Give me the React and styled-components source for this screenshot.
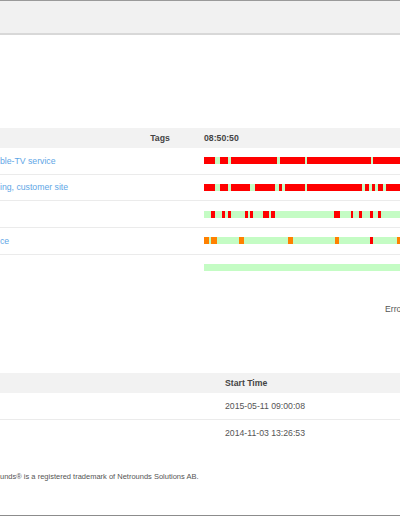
import React from "react";
import styled, { createGlobalStyle } from "styled-components";

const GlobalStyle = createGlobalStyle`
  html, body {
    margin: 0;
    padding: 0;
    background: #ffffff;
    overflow: hidden;
  }
  body {
    font-family: "Liberation Sans", Arial, Helvetica, sans-serif;
    color: #555;
  }
`;

const Page = styled.div`
  width: 400px;
  height: 516px;
  box-sizing: border-box;
  border-bottom: 1px solid #8c8c8c;
  overflow: hidden;
  display: flex;
  flex-direction: column;
`;

const TopBar = styled.div`
  height: 32px;
  flex-shrink: 0;
  background: #f1f1f1;
  border-top: 1px solid #9a9a9a;
  border-bottom: 2px solid #d8d8d8;
`;

const Table = styled.div`
  display: flex;
  flex-direction: column;
  margin-top: ${({ $top }) => $top}px;
  width: 520px;
`;

const HeadRow = styled.div`
  display: grid;
  grid-template-columns: ${({ $cols }) => $cols};
  height: 20px;
  align-items: center;
  background: #f2f2f2;
  font-size: 8.7px;
  font-weight: bold;
  color: #444;
`;

const Row = styled.div`
  display: grid;
  grid-template-columns: ${({ $cols }) => $cols};
  height: ${({ $h }) => $h}px;
  box-sizing: border-box;
  align-items: center;
  font-size: 8.7px;
  border-bottom: ${({ $last }) => ($last ? "none" : "1px solid #ebebeb")};
`;

const Cell = styled.div`
  text-align: ${({ $align }) => $align || "left"};
  white-space: nowrap;
`;

const NameLink = styled.a`
  color: #5ea6e6;
  text-decoration: none;
`;

const Bar = styled.div`
  position: relative;
  height: 7px;
  width: 260px;
  background: #c4fcc4;
`;

const Segment = styled.span`
  position: absolute;
  top: 0;
  bottom: 0;
  background: ${({ $kind }) => ($kind === "o" ? "#ff8000" : "#ff0000")};
`;

const Legend = styled.div`
  display: flex;
  margin-top: 23px;
  padding-left: 385px;
  height: 11px;
  line-height: 11px;
  font-size: 8.7px;
  color: #555;
  white-space: nowrap;
`;

const DateText = styled.span`
  color: #555;
`;

const Footer = styled.div`
  margin-top: 26px;
  height: 10px;
  line-height: 10px;
  font-size: 7.5px;
  color: #555;
  white-space: nowrap;
`;

const COLS1 = "130px 60px 14px 1fr";
const COLS2 = "225px 1fr";

// segment positions in px from the start of the timeline
const rows = [
  {
    name: "ble-TV service",
    segs: [
      [0, 10.7], [16, 24], [26.7, 73.3], [76, 100.7], [103.3, 166.7], [168.7, 240],
    ],
  },
  {
    name: "ing, customer site",
    segs: [
      [0, 10.7], [16, 24], [26.7, 46], [51.3, 70.7], [75.3, 78], [81.3, 100.7],
      [103.3, 158], [160.7, 165.3], [168, 171.3], [174, 179.3], [182, 240],
    ],
  },
  {
    name: "",
    segs: [
      [7.3, 11.3], [18, 21.3], [24, 27.3], [40.7, 44], [46, 48.7], [59.3, 65.3],
      [67.3, 70.7], [130, 136], [146.7, 149.3], [155.3, 158], [166, 168.7], [174, 176.7],
    ],
  },
  {
    name: "ce",
    segs: [
      [0, 4.7, "o"], [7.3, 12.7, "o"], [35.3, 40, "o"], [84, 89.3, "o"],
      [130.7, 135.3, "o"], [166, 168.7], [193.3, 198, "o"],
    ],
  },
  { name: "", segs: [] },
];

const sessions = ["2015-05-11 09:00:08", "2014-11-03 13:26:53"];

const App = () => {
  return (
    <>
      <GlobalStyle />
      <Page>
        <TopBar />

        <Table $top={93}>
          <HeadRow $cols={COLS1}>
            <Cell />
            <Cell $align="center">Tags</Cell>
            <Cell />
            <Cell>08:50:50</Cell>
          </HeadRow>
          {rows.map((r, i) => (
            <Row key={i} $cols={COLS1} $h={26.67} $last={i === rows.length - 1}>
              <Cell>
                <NameLink href="#">{r.name}</NameLink>
              </Cell>
              <Cell />
              <Cell />
              <Cell>
                <Bar>
                  {r.segs.map(([a, b, k], j) => (
                    <Segment
                      key={j}
                      $kind={k}
                      style={{ left: a + "px", width: b - a + "px" }}
                    />
                  ))}
                </Bar>
              </Cell>
            </Row>
          ))}
        </Table>

        <Legend>
          <span>Erro</span>
        </Legend>

        <Table $top={58}>
          <HeadRow $cols={COLS2}>
            <Cell />
            <Cell>Start Time</Cell>
          </HeadRow>
          {sessions.map((s, i) => (
            <Row key={s} $cols={COLS2} $h={26.5} $last={i === sessions.length - 1}>
              <Cell />
              <Cell>
                <DateText>{s}</DateText>
              </Cell>
            </Row>
          ))}
        </Table>

        <Footer>unds® is a registered trademark of Netrounds Solutions AB.</Footer>
      </Page>
    </>
  );
};

export default App;
